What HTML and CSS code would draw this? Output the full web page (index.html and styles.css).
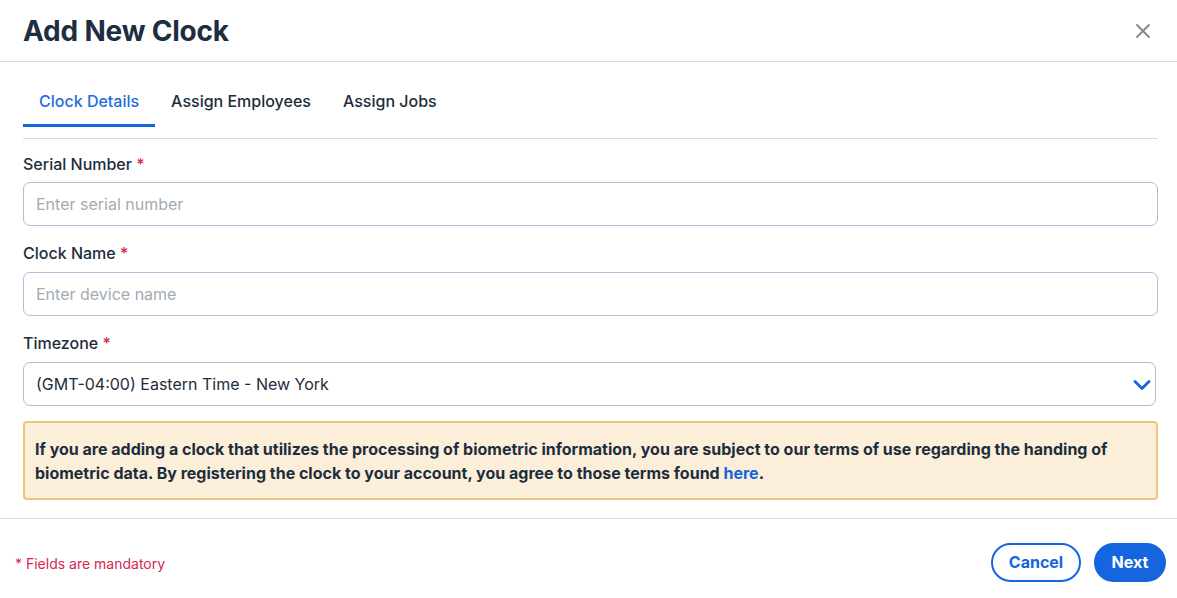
FILE: index.html
```html
<!DOCTYPE html>
<html lang="en">
<head>
<meta charset="utf-8">
<title>Add New Clock</title>
<link rel="stylesheet" href="styles.css">
</head>
<body>
<div class="modal">
  <header class="modal-header">
    <h1 class="modal-title">Add New Clock</h1>
    <button class="close-btn" aria-label="Close">
      <svg width="16" height="16" viewBox="0 0 16 16"><path d="M2 2 L14 14 M14 2 L2 14" stroke="#7d8791" stroke-width="1.8" fill="none" stroke-linecap="round"/></svg>
    </button>
  </header>
  <main class="modal-body">
    <nav class="tabs">
      <div class="tab active">Clock Details</div>
      <div class="tab">Assign Employees</div>
      <div class="tab">Assign Jobs</div>
    </nav>
    <div class="field">
      <label class="label">Serial Number <span class="req">*</span></label>
      <input class="input" type="text" placeholder="Enter serial number">
    </div>
    <div class="field">
      <label class="label">Clock Name <span class="req">*</span></label>
      <input class="input" type="text" placeholder="Enter device name">
    </div>
    <div class="field">
      <label class="label">Timezone <span class="req">*</span></label>
      <div class="select">
        <span class="select-value">(GMT-04:00) Eastern Time - New York</span>
        <svg class="chevron" width="18" height="12" viewBox="0 0 18 12"><path d="M2 2.5 L9 9.5 L16 2.5" stroke="#1565de" stroke-width="2.8" fill="none" stroke-linecap="round" stroke-linejoin="round"/></svg>
      </div>
    </div>
    <p class="notice">If you are adding a clock that utilizes the processing of biometric information, you are subject to our terms of use regarding the handing of biometric data. By registering the clock to your account, you agree to those terms found <a class="link" href="#">here</a>.</p>
  </main>
  <footer class="modal-footer">
    <span class="mandatory">* Fields are mandatory</span>
    <div class="actions">
      <button class="btn btn-outline">Cancel</button>
      <button class="btn btn-primary">Next</button>
    </div>
  </footer>
</div>
</body>
</html>
```
FILE: styles.css
```css
* { box-sizing: border-box; }
html, body { margin: 0; padding: 0; background: #fff; }
body {
  font-family: Inter, "Noto Sans", "Liberation Sans", sans-serif;
  color: #1d2d3c;
  width: 1177px;
  height: 598px;
  overflow: hidden;
}
.modal-header {
  height: 62px;
  border-bottom: 1px solid #d3dbe2;
  display: flex;
  align-items: center;
  justify-content: space-between;
  padding: 0 25px 0 23px;
}
.modal-title {
  margin: 0;
  font-size: 28px;
  font-weight: 700;
  color: #1c2e3f;
  letter-spacing: -0.2px;
  line-height: 1;
  padding-top: 1px;
}
.close-btn {
  border: none;
  background: none;
  padding: 0;
  width: 18px;
  height: 18px;
  display: flex;
  align-items: center;
  justify-content: center;
  cursor: pointer;
}
.modal-body {
  padding: 0 19px 0 23px;
}
.tabs {
  display: flex;
  padding-top: 29px;
  padding-bottom: 11px;
  border-bottom: 1px solid #cfdbe5;
}
.tab {
  padding: 0 16px 13px;
  font-size: 16px;
  font-weight: 500;
  line-height: 20px;
  color: #1d2d3c;
  border-bottom: 3px solid transparent;
}
.tab.active {
  color: #1f6ce0;
  border-bottom-color: #1565de;
}
.field {
  margin-top: 15px;
}
.field + .field { margin-top: 17px; }
.label {
  display: block;
  font-size: 16px;
  font-weight: 500;
  line-height: 21px;
  color: #1d2d3c;
  margin-bottom: 7px;
}
.field + .field .label { margin-bottom: 8px; }
.req { color: #d3284f; }
.input {
  display: block;
  width: 100%;
  height: 44px;
  border: 1px solid #a9c0d6;
  border-radius: 7px;
  padding: 0 12px;
  font-family: inherit;
  font-size: 16px;
  color: #1d2d3c;
  outline: none;
}
.input::placeholder { color: #a3abb3; }
.select {
  width: calc(100% - 2px);
  height: 44px;
  border: 1px solid #a9c0d6;
  border-radius: 7px;
  padding: 0 4px 0 12px;
  display: flex;
  align-items: center;
  justify-content: space-between;
  font-size: 16px;
  color: #1d2d3c;
}
.chevron { margin-top: 1px; }
.notice {
  margin: 15px 0 0;
  background: #fcefd9;
  border: 2px solid #f1c47c;
  border-radius: 4px;
  padding: 14px 12px 13px 10px;
  font-size: 16px;
  font-weight: 700;
  line-height: 24px;
  color: #1c2d3e;
}
.link { color: #1565de; text-decoration: none; }
.modal-footer {
  margin-top: 18px;
  border-top: 1px solid #d8dfe4;
  height: 80px;
  padding: 7px 11px 0 15px;
  display: flex;
  align-items: center;
  justify-content: space-between;
}
.mandatory {
  font-size: 14px;
  color: #d3284f;
  padding-top: 2px;
}
.actions {
  display: flex;
  gap: 13px;
}
.btn {
  height: 39px;
  border-radius: 20px;
  font-family: inherit;
  font-size: 16px;
  font-weight: 700;
  cursor: pointer;
}
.btn-outline {
  width: 90px;
  background: #fff;
  border: 2px solid #1565de;
  color: #1565de;
}
.btn-primary {
  width: 72px;
  background: #1565de;
  border: 2px solid #1565de;
  color: #fff;
}
```
